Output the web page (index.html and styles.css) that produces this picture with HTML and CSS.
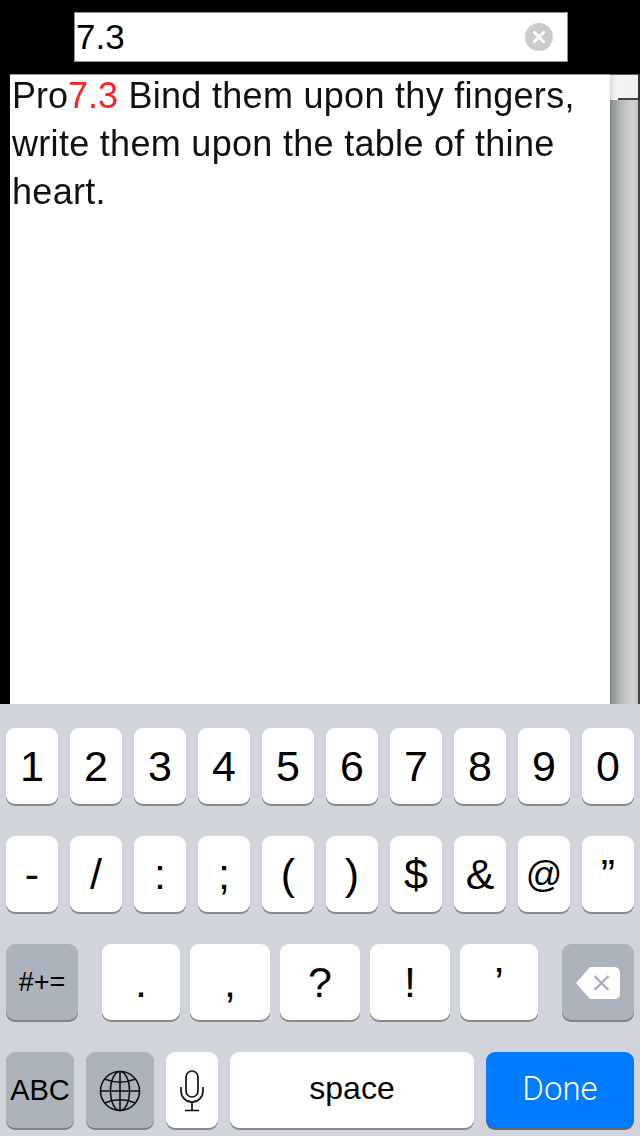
FILE: index.html
```html
<!DOCTYPE html>
<html lang="en">
  <head>
    <meta charset="UTF-8">
    <meta name="viewport" content="width=device-width, initial-scale=1.0">
    <title>Verse search</title>
    <link rel="stylesheet" href="styles.css">
  </head>
  <body>
    <div id="screen">

      <div id="search-bar">
        <div id="search-box">
          <span id="search-text">7.3</span>
          <svg class="clear-icon" width="28" height="28" viewBox="0 0 28 28">
            <circle cx="14" cy="14" r="14" fill="#cbcbcb"/>
            <path d="M8.5 8.5 L19.5 19.5 M19.5 8.5 L8.5 19.5" stroke="#fff" stroke-width="2.6"/>
          </svg>
        </div>
      </div>

      <div id="results">
        <div id="verse">
          <div id="verse-text"><span class="ref">Pro<span class="match">7.3</span></span> Bind them upon thy fingers, write them upon the table of thine heart.</div>
        </div>
        <div id="scrollbar">
          <div id="scroll-up"></div>
          <div id="scroll-track"></div>
        </div>
      </div>

      <div id="keyboard">
        <div class="row">
          <div class="key">1</div>
          <div class="key">2</div>
          <div class="key">3</div>
          <div class="key">4</div>
          <div class="key">5</div>
          <div class="key">6</div>
          <div class="key">7</div>
          <div class="key">8</div>
          <div class="key">9</div>
          <div class="key">0</div>
        </div>
        <div class="row">
          <div class="key">-</div>
          <div class="key">/</div>
          <div class="key">:</div>
          <div class="key">;</div>
          <div class="key">(</div>
          <div class="key">)</div>
          <div class="key">$</div>
          <div class="key">&amp;</div>
          <div class="key key-at">@</div>
          <div class="key">”</div>
        </div>
        <div class="row row-punct">
          <div class="key dark key-shift">#+=</div>
          <div class="punct-group">
            <div class="key p-short">.</div>
            <div class="key p-long">,</div>
            <div class="key p-long">?</div>
            <div class="key p-long">!</div>
            <div class="key p-short">’</div>
          </div>
          <div class="key dark key-delete">
            <svg width="44" height="32" viewBox="0 0 44 32">
              <path d="M14 0 H38 Q44 0 44 6 V26 Q44 32 38 32 H14 L0 16 Z" fill="#fff"/>
              <path d="M18.5 9 L32.5 23 M32.5 9 L18.5 23" stroke="#a9b0bb" stroke-width="2.4"/>
            </svg>
          </div>
        </div>
        <div class="row row-bottom">
          <div class="key dark key-abc">ABC</div>
          <div class="key dark key-globe">
            <svg width="42" height="42" viewBox="0 0 42 42" fill="none" stroke="#111" stroke-width="1.6">
              <circle cx="21" cy="21" r="19.5"/>
              <ellipse cx="21" cy="21" rx="9.5" ry="19.5"/>
              <path d="M21 1.5 V40.5 M1.5 21 H40.5"/>
              <path d="M5.5 9 Q21 15.5 36.5 9 M5.5 33 Q21 26.5 36.5 33"/>
            </svg>
          </div>
          <div class="key key-mic">
            <svg width="24" height="42" viewBox="0 0 24 42" fill="none" stroke="#111" stroke-width="1.7">
              <rect x="6" y="1" width="12" height="26" rx="6"/>
              <path d="M1 17 V21 A11 11 0 0 0 23 21 V17"/>
              <path d="M12 32 V40.5 M5 40.5 H19"/>
            </svg>
          </div>
          <div class="key key-space">space</div>
          <div class="key key-done">Done</div>
        </div>
      </div>

    </div>
  </body>
</html>
```

FILE: styles.css
```css
* { box-sizing: border-box; }

body {
	margin: 0;
	background-color: #000;
	font-family: 'Liberation Sans', Arial, sans-serif;
}

#screen {
	display: flex;
	flex-direction: column;
	height: 1136px;
	overflow: hidden;
}

#search-bar {
	display: flex;
	justify-content: center;
	padding: 12px 72px 12px 74px;
	height: 74px;
}

#search-box {
	display: flex;
	align-items: center;
	justify-content: space-between;
	width: 100%;
	height: 50px;
	padding: 0 14px 0 1px;
	background-color: #fff;
	border: 1px solid #8f8f8f;
	color: #000;
	font-size: 35px;
}

#results {
	display: flex;
	flex: 1;
	margin-left: 10px;
	min-height: 0;
}

#verse {
	flex: 1;
	padding: 0 24px 0 2px;
	background-color: #fff;
	border-top: 1px solid #999;
	overflow: hidden;
}

#verse-text {
	margin-top: -3px;
	color: #111;
	font-size: 36px;
	line-height: 48px;
	letter-spacing: 0.3px;
	filter: blur(0.5px);
}

.ref { letter-spacing: 0; }

.match { color: #ff2020; }

/* Old desktop style scrollbar on the right */
#scrollbar {
	display: flex;
	flex-direction: column;
	width: 30px;
}

#scroll-up {
	height: 26px;
	background:
		linear-gradient(#444, #444) 8px 100% / 100% 2px no-repeat,
		linear-gradient(to right, #dcdcdc, #f6f6f6 25%, #f0f0f0);
	border-top: 1px solid #555;
	border-right: 2px solid #333;
}

#scroll-track {
	flex: 1;
	background: linear-gradient(to right, #868a8a, #b4b8b8 35%, #d2d4d4 75%, #c4c6c6 92%, #444 95%);
}

#keyboard {
	display: flex;
	flex-direction: column;
	gap: 32px;
	height: 432px;
	padding: 24px 6px 0;
	background-color: #d1d5db;
}

.row {
	display: flex;
	justify-content: space-between;
	height: 76px;
}

.key {
	display: flex;
	align-items: center;
	justify-content: center;
	width: 52px;
	padding-top: 1px;
	background-color: #fff;
	border-radius: 9px;
	box-shadow: 0 2px 0 #88898d;
	color: #000;
	font-size: 43px;
}

.key.dark {
	background-color: #abb2bc;
	box-shadow: 0 2px 0 #7f8287;
}

.key-at { font-size: 36px; }

.key-shift {
	width: 72px;
	font-size: 27px;
}

.key-delete { width: 72px; }

.punct-group {
	display: flex;
	gap: 10px;
}

.p-short { width: 78px; }
.p-long { width: 80px; }

.row-bottom {
	justify-content: flex-start;
	gap: 12px;
}

.key-abc,
.key-globe { width: 68px; }

.key-abc {
	padding-top: 0;
	font-size: 29px;
}

.key-space {
	width: 244px;
	padding: 0 0 3px;
	font-size: 32px;
}

.key-done {
	width: 148px;
	padding: 0 0 3px;
	background-color: #007aff;
	box-shadow: 0 2px 0 #66686c;
	color: #fff;
	font-family: Roboto, 'Liberation Sans', sans-serif;
	font-size: 33px;
	font-weight: 300;
}
```
